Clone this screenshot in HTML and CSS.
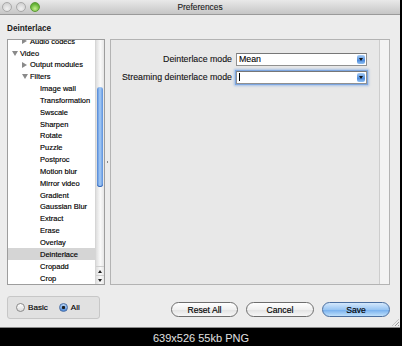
FILE: index.html
```html
<!DOCTYPE html>
<html lang="en">
<head>
    <meta charset="UTF-8">
    <meta name="viewport" content="width=device-width, initial-scale=1.0">
    <title>Preferences</title>
    <link rel="stylesheet" href="styles.css">
</head>
<body>
    <div class="window">
        <div class="titlebar">
            <div class="lights">
                <span class="light"></span>
                <span class="light"></span>
                <span class="light green"></span>
            </div>
            <div class="title">Preferences</div>
            <div></div>
        </div>

        <div class="content">
            <h1 class="section">Deinterlace</h1>

            <div class="panes">
                <div class="tree">
                    <ul class="items">
                        <li class="lv1"><span class="tog closed"></span>Audio codecs</li>
                        <li class="lv0"><span class="tog open"></span>Video</li>
                        <li class="lv1"><span class="tog closed"></span>Output modules</li>
                        <li class="lv1"><span class="tog open"></span>Filters</li>
                        <li class="lv2"><span class="tog"></span>Image wall</li>
                        <li class="lv2"><span class="tog"></span>Transformation</li>
                        <li class="lv2"><span class="tog"></span>Swscale</li>
                        <li class="lv2"><span class="tog"></span>Sharpen</li>
                        <li class="lv2"><span class="tog"></span>Rotate</li>
                        <li class="lv2"><span class="tog"></span>Puzzle</li>
                        <li class="lv2"><span class="tog"></span>Postproc</li>
                        <li class="lv2"><span class="tog"></span>Motion blur</li>
                        <li class="lv2"><span class="tog"></span>Mirror video</li>
                        <li class="lv2"><span class="tog"></span>Gradient</li>
                        <li class="lv2"><span class="tog"></span>Gaussian Blur</li>
                        <li class="lv2"><span class="tog"></span>Extract</li>
                        <li class="lv2"><span class="tog"></span>Erase</li>
                        <li class="lv2"><span class="tog"></span>Overlay</li>
                        <li class="lv2 selected"><span class="tog"></span>Deinterlace</li>
                        <li class="lv2"><span class="tog"></span>Cropadd</li>
                        <li class="lv2"><span class="tog"></span>Crop</li>
                    </ul>
                    <div class="scrollbar">
                        <div class="track-top"></div>
                        <div class="thumb"></div>
                        <div class="track"></div>
                        <div class="step up"></div>
                        <div class="step down"></div>
                    </div>
                </div>

                <div class="splitter"><span class="dot"></span></div>

                <div class="panel">
                    <div class="form">
                        <label>Deinterlace mode</label>
                        <div class="combo">
                            <span class="value">Mean</span>
                            <span class="arrow"></span>
                        </div>
                        <label>Streaming deinterlace mode</label>
                        <div class="combo focus">
                            <span class="caret"></span>
                            <span class="arrow"></span>
                        </div>
                    </div>
                    <div class="edge"></div>
                </div>
            </div>

            <div class="footer">
                <div class="mode">
                    <span class="radio"></span><span class="radio-label">Basic</span>
                    <span class="radio on"></span><span class="radio-label">All</span>
                </div>
                <div class="buttons">
                    <button class="btn reset">Reset All</button>
                    <button class="btn">Cancel</button>
                    <button class="btn save">Save</button>
                </div>
            </div>
        </div>

        <span class="resize"></span>
    </div>

    <div class="caption">639x526 55kb PNG</div>
</body>
</html>
```

FILE: styles.css
```css
body {
    margin: 0;
    width: 402px;
    height: 346px;
    overflow: hidden;
    background-color: #000;
    font-family: "Liberation Sans", Arial, sans-serif;
}

.window {
    position: relative;
    width: 400px;
    height: 328px;
    box-sizing: border-box;
    border-bottom: 1px solid #8a8a8a;
    background-color: #ececec;
    display: flex;
    flex-direction: column;
}

/* title bar */

.titlebar {
    height: 15px;
    box-sizing: border-box;
    border-bottom: 1px solid #9a9a9a;
    background: linear-gradient(#e9e9e9, #c6c6c6);
    display: grid;
    grid-template-columns: 1fr auto 1fr;
    align-items: center;
}

.lights {
    display: flex;
    gap: 4px;
    padding-left: 2px;
}

.light {
    width: 10px;
    height: 10px;
    box-sizing: border-box;
    border-radius: 50%;
    border: 1px solid #a9a9a9;
    background: radial-gradient(circle at 50% 70%, #f0f0f0, #c9c9c9);
}

.light.green {
    border-color: #5c9a34;
    background: radial-gradient(circle at 50% 70%, #c4f08c, #6cb83c 60%, #4f9a25);
}

.title {
    font-size: 8.4px;
    color: #1a1a1a;
    -webkit-text-stroke: 0.1px #1a1a1a;
}

/* content */

.content {
    flex: 1;
    display: flex;
    flex-direction: column;
    padding: 0 10px 0 7px;
}

.section {
    margin: 9px 0 5px 0;
    font-size: 8.2px;
    line-height: 10px;
    font-weight: bold;
    color: #1a1a1a;
}

.panes {
    display: flex;
    height: 246px;
}

/* tree */

.tree {
    width: 98px;
    box-sizing: border-box;
    border: 1px solid #9d9d9d;
    background-color: #fff;
    display: flex;
    overflow: hidden;
}

.items {
    flex: 1;
    list-style: none;
    margin: -4.75px 0 0 0;
    padding: 0;
}

.items li {
    height: 11.85px;
    display: flex;
    align-items: center;
    font-size: 7.5px;
    color: #000;
    -webkit-text-stroke: 0.15px #000;
    white-space: nowrap;
}

.items .lv0 { padding-left: 4px; }
.items .lv1 { padding-left: 14px; }
.items .lv2 { padding-left: 24px; }

.items li.selected {
    background-color: #d5d5d5;
}

.tog {
    width: 8px;
    flex: none;
    display: flex;
    align-items: center;
}

.tog.closed::before {
    content: "";
    border-left: 5px solid #8a8a8a;
    border-top: 3px solid transparent;
    border-bottom: 3px solid transparent;
}

.tog.open::before {
    content: "";
    border-top: 5px solid #8a8a8a;
    border-left: 3px solid transparent;
    border-right: 3px solid transparent;
}

.scrollbar {
    width: 9px;
    flex: none;
    box-sizing: border-box;
    border-left: 1px solid #d6d6d6;
    background: linear-gradient(90deg, #dedede, #fafafa 55%, #e6e6e6);
    display: flex;
    flex-direction: column;
}

.track-top {
    height: 47px;
    border-radius: 4px 4px 0 0;
}

.thumb {
    height: 100px;
    margin: 0 1px;
    border-radius: 4px;
    background: linear-gradient(90deg, #4f86d6, #a8cdf7 50%, #5a90dc);
    box-shadow: inset 0 -1px 0 #2f62b5;
}

.track {
    flex: 1;
}

.step {
    height: 8px;
    display: flex;
    align-items: center;
    justify-content: center;
    border-top: 1px solid #cfcfcf;
}

.step.up::before {
    content: "";
    border-bottom: 3px solid #222;
    border-left: 2px solid transparent;
    border-right: 2px solid transparent;
}

.step.down::before {
    content: "";
    border-top: 3px solid #222;
    border-left: 2px solid transparent;
    border-right: 2px solid transparent;
}

.splitter {
    width: 5px;
    display: flex;
    align-items: center;
    justify-content: center;
}

.dot {
    width: 1px;
    height: 2px;
    background-color: #888;
}

/* settings panel */

.panel {
    flex: 1;
    border: 1px solid #b3b3b3;
    background-color: #e8e8e8;
    display: flex;
}

.form {
    flex: 1;
    display: grid;
    grid-template-columns: 1fr 131px;
    column-gap: 4px;
    row-gap: 5.5px;
    align-content: start;
    padding: 13px 12px 0 0;
}

.form label {
    text-align: right;
    font-size: 8.8px;
    line-height: 12.6px;
    color: #111;
    -webkit-text-stroke: 0.1px #111;
    white-space: nowrap;
}

.combo {
    height: 12.6px;
    box-sizing: border-box;
    border: 1px solid #909090;
    border-top-color: #777;
    background-color: #fff;
    display: flex;
    align-items: center;
}

.combo.focus {
    box-shadow: 0 0 0 1px #7da6e0, 0 0 2px 2px rgba(110, 160, 230, 0.55);
}

.value {
    padding-left: 2px;
    font-size: 8.8px;
    color: #000;
    -webkit-text-stroke: 0.1px #000;
}

.caret {
    margin-left: 2px;
    width: 1px;
    height: 8px;
    background-color: #000;
}

.arrow {
    margin-left: auto;
    margin-right: 1px;
    width: 8px;
    height: 9px;
    border-radius: 2px;
    background: linear-gradient(#a9cdf5, #5d97e0 50%, #3f7fd6 51%, #8fc0f3);
    display: flex;
    align-items: center;
    justify-content: center;
}

.arrow::before {
    content: "";
    border-top: 3px solid #111;
    border-left: 2px solid transparent;
    border-right: 2px solid transparent;
}

.edge {
    width: 9px;
    border-left: 1px solid #cdcdcd;
    background-color: #f3f3f3;
}

/* footer */

.footer {
    margin-top: 11px;
    display: flex;
    align-items: flex-start;
}

.mode {
    width: 93px;
    height: 23px;
    box-sizing: border-box;
    padding-left: 8px;
    border: 1px solid #c7c7c7;
    border-radius: 3px;
    background-color: #e1e1e1;
    display: flex;
    align-items: center;
}

.radio {
    width: 9px;
    height: 9px;
    box-sizing: border-box;
    border-radius: 50%;
    border: 1px solid #8a8a8a;
    background: linear-gradient(#ffffff, #dcdcdc);
}

.radio.on {
    margin-left: 11px;
    border-color: #4a6fa6;
    background: radial-gradient(circle, #1c1c1c 0 1.3px, transparent 1.9px), linear-gradient(#b5d4f6, #4c88d8);
}

.radio-label {
    margin-left: 3px;
    font-size: 8.1px;
    color: #000;
    -webkit-text-stroke: 0.15px #000;
}

.buttons {
    margin-left: auto;
    margin-top: 6px;
    display: flex;
    gap: 8px;
}

.btn {
    width: 68px;
    height: 15px;
    padding: 0;
    box-sizing: border-box;
    border: 1px solid #6e6e6e;
    border-radius: 8px;
    background: linear-gradient(#ffffff, #f0f0f0 50%, #e2e2e2 51%, #f7f7f7);
    font-family: "Liberation Sans", Arial, sans-serif;
    font-size: 8.6px;
    color: #000;
    -webkit-text-stroke: 0.15px #000;
}

.btn.reset {
    width: 67px;
}

.btn.save {
    border-color: #4a6e9f;
    background: linear-gradient(#d4e8fc, #9ac6f3 50%, #71aced 51%, #bfe0fb);
}

.resize {
    position: absolute;
    right: 1px;
    bottom: 1px;
    width: 7px;
    height: 7px;
    background: repeating-linear-gradient(135deg, transparent 0 1.5px, #9a9a9a 1.5px 2.5px);
    clip-path: polygon(100% 0, 100% 100%, 0 100%);
}

/* thumbnail caption */

.caption {
    height: 18px;
    padding-top: 1px;
    box-sizing: border-box;
    line-height: 18px;
    text-align: center;
    font-size: 11px;
    color: #e2e2e2;
}
```
